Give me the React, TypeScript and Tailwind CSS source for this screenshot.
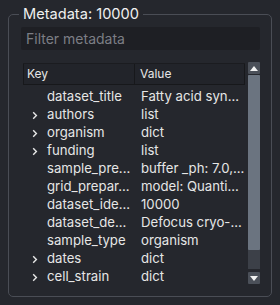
import React from "react";

const rows: { k: string; v: string; exp?: boolean }[] = [
  { k: "dataset_title", v: "Fatty acid syn..." },
  { k: "authors", v: "list", exp: true },
  { k: "organism", v: "dict", exp: true },
  { k: "funding", v: "list", exp: true },
  { k: "sample_pre...", v: "buffer _ph: 7.0,..." },
  { k: "grid_prepar...", v: "model: Quanti..." },
  { k: "dataset_ide...", v: "10000" },
  { k: "dataset_de...", v: "Defocus cryo-..." },
  { k: "sample_type", v: "organism" },
  { k: "dates", v: "dict", exp: true },
  { k: "cell_strain", v: "dict", exp: true },
];

function Chevron() {
  return (
    <svg width="6" height="9" viewBox="0 0 6 9" className="block">
      <path d="M1.2 1.2 L4.4 4.5 L1.2 7.8" stroke="#e8e8e8" strokeWidth="1.4" fill="none" />
    </svg>
  );
}

export default function App() {
  return (
    <div
      className="w-[280px] h-[305px] bg-[#25272d] text-[#e6e6e6] overflow-hidden"
      style={{ fontFamily: "Inter, 'Liberation Sans', sans-serif" }}
    >
      <div className="pt-[14px] px-[8px]">
        <div className="relative h-[283px] border border-[#4a4d55] rounded-[5px]">
          <div className="absolute -top-[10px] left-[10px] px-[4px] bg-[#25272d] text-[14.6px] leading-[18px] text-[#f0f0f0]">
            Metadata: 10000
          </div>
          <div className="pt-[12px] pl-[12px] pr-[11px]">
            <div className="h-[23px] bg-[#1e1f24] rounded-[2px] flex items-center pl-[5px] text-[14px] text-[#7c7e85]">
              Filter metadata
            </div>
            <div className="mt-[13px] ml-[2px] flex">
              <div className="flex-1 flex flex-col">
                <div className="h-[22px] flex bg-[#22242a] border-t border-[#1b1c20] border-b border-b-[#17181b] text-[12px]">
                  <div className="w-[112px] border-l border-[#17181b] border-r border-r-[#17181b] pl-[3px] flex items-center">Key</div>
                  <div className="flex-1 pl-[5px] flex items-center border-r border-[#17181b]">Value</div>
                </div>
                <div className="pt-[3px]">
                  {rows.map((r) => (
                    <div key={r.k} className="h-[18px] flex items-center text-[13.2px]">
                      <div className="w-[112px] flex items-center">
                        <div className="w-[24px] flex justify-end pr-[9px]">{r.exp ? <Chevron /> : null}</div>
                        <span>{r.k}</span>
                      </div>
                      <div className="flex-1 pl-[6px] whitespace-nowrap">{r.v}</div>
                    </div>
                  ))}
                </div>
              </div>
              <div className="w-[12px] ml-[3px] -mt-[1px] flex flex-col">
                <div className="h-[12px] bg-[#4b5059] flex items-center justify-center rounded-[1px]">
                  <svg width="8" height="5" viewBox="0 0 8 5"><path d="M0 5 L4 0 L8 5 Z" fill="#f2f2f2" /></svg>
                </div>
                <div className="mt-[1px] h-[194px] bg-[#3c4048] flex flex-col">
                  <div className="h-[175px] bg-[#6b7480] rounded-[1px]" />
                </div>
                <div className="mt-[3px] h-[12px] bg-[#4b5059] flex items-center justify-center rounded-[1px]">
                  <svg width="8" height="5" viewBox="0 0 8 5"><path d="M0 0 L4 5 L8 0 Z" fill="#f2f2f2" /></svg>
                </div>
              </div>
            </div>
          </div>
        </div>
      </div>
    </div>
  );
}
